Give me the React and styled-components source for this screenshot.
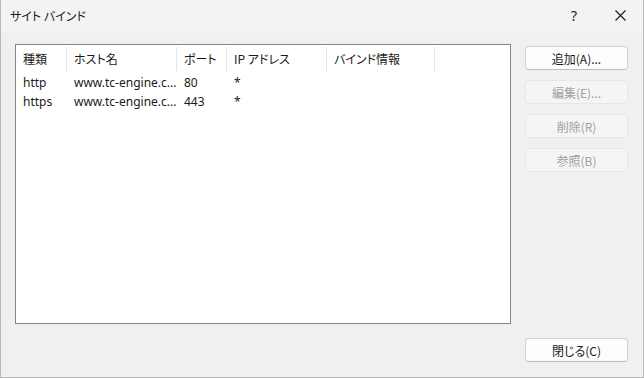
import React from "react";
import styled, { createGlobalStyle } from "styled-components";

const GlobalStyle = createGlobalStyle`
  html, body {
    margin: 0;
    padding: 0;
    background: #f0f0f0;
  }
  * {
    box-sizing: border-box;
  }
`

const columns = [
    { label: "種類", width: 51 },
    { label: "ホスト名", width: 110 },
    { label: "ポート", width: 50 },
    { label: "IP アドレス", width: 100 },
    { label: "バインド情報", width: 108 },
]

const bindings = [
    ["http", "www.tc-engine.c...", "80", "*", ""],
    ["https", "www.tc-engine.c...", "443", "*", ""],
]

function App() {
    return (
        <>
            <GlobalStyle />
            <Window>
                <TitleBar>
                    <Title>サイト バインド</Title>
                    <CaptionButton>?</CaptionButton>
                    <CaptionButton>
                        <svg width="11" height="11" viewBox="0 0 11 11">
                            <path d="M0.5 0.5 L10.5 10.5 M10.5 0.5 L0.5 10.5" stroke="#1a1a1a" strokeWidth="1.1" fill="none" />
                        </svg>
                    </CaptionButton>
                </TitleBar>
                <Body>
                    <ListView>
                        <HeaderRow>
                            {columns.map((c) => (
                                <HeaderCell key={c.label} style={{ width: c.width }}>{c.label}</HeaderCell>
                            ))}
                        </HeaderRow>
                        {bindings.map((row, i) => (
                            <Row key={i}>
                                {row.map((v, j) => (
                                    <Cell key={j} style={{ width: columns[j].width }}>{v}</Cell>
                                ))}
                            </Row>
                        ))}
                    </ListView>
                    <ButtonColumn>
                        <Button>追加(A)...</Button>
                        <Button disabled>編集(E)...</Button>
                        <Button disabled>削除(R)</Button>
                        <Button disabled>参照(B)</Button>
                    </ButtonColumn>
                    <Footer>
                        <Button>閉じる(C)</Button>
                    </Footer>
                </Body>
            </Window>
        </>
    );
}

export default App;

const Window = styled.div`
width: 644px;
height: 378px;
display: flex;
flex-direction: column;
background: #f0f0f0;
border: 1px solid #b9b9b9;
border-top: none;
font-family: "Noto Sans", "Noto Sans CJK JP", sans-serif;
font-size: 12px;
font-feature-settings: "palt";
color: #1a1a1a;
`

const TitleBar = styled.div`
height: 31px;
display: flex;
align-items: center;
background: #f3f3f3;
`

const Title = styled.div`
flex: 1;
padding-left: 9px;
font-family: "Noto Sans CJK JP", sans-serif;
font-size: 12px;
color: #1a1a1a;
`

const CaptionButton = styled.div`
width: 46px;
height: 31px;
display: flex;
align-items: center;
justify-content: center;
font-size: 14px;
color: #1a1a1a;
`

const Body = styled.div`
flex: 1;
display: grid;
grid-template-columns: 496px 103px;
grid-template-rows: 280px 1fr;
column-gap: 14px;
padding: 13px 15px 15px 14px;
`

const ListView = styled.div`
background: #ffffff;
border: 1px solid #82868e;
`

const HeaderRow = styled.div`
display: flex;
height: 27px;
align-items: center;
`

const HeaderCell = styled.div`
height: 24px;
display: flex;
align-items: center;
padding-left: 7px;
border-right: 1px solid #e5e5e5;
font-family: "Noto Sans CJK JP", sans-serif;
white-space: nowrap;
`

const Row = styled.div`
display: flex;
height: 19px;
align-items: center;
padding-top: 1px;
`

const Cell = styled.div`
padding-left: 7px;
white-space: nowrap;
overflow: hidden;
`

const ButtonColumn = styled.div`
display: flex;
flex-direction: column;
gap: 10px;
padding-top: 2px;
`

const Footer = styled.div`
grid-column: 2;
display: flex;
align-items: flex-end;
`

const Button = styled.button`
width: 103px;
height: 24px;
padding: 0;
background: ${(p) => (p.disabled ? "#f5f5f5" : "#fdfdfd")};
border: 1px solid ${(p) => (p.disabled ? "#e6e6e6" : "#d0d0d0")};
border-bottom-color: ${(p) => (p.disabled ? "#e6e6e6" : "#bcbcbc")};
border-radius: 4px;
font-family: "Noto Sans CJK JP", sans-serif;
font-size: 12px;
font-feature-settings: "palt";
color: ${(p) => (p.disabled ? "#a0a0a0" : "#1a1a1a")};
`
